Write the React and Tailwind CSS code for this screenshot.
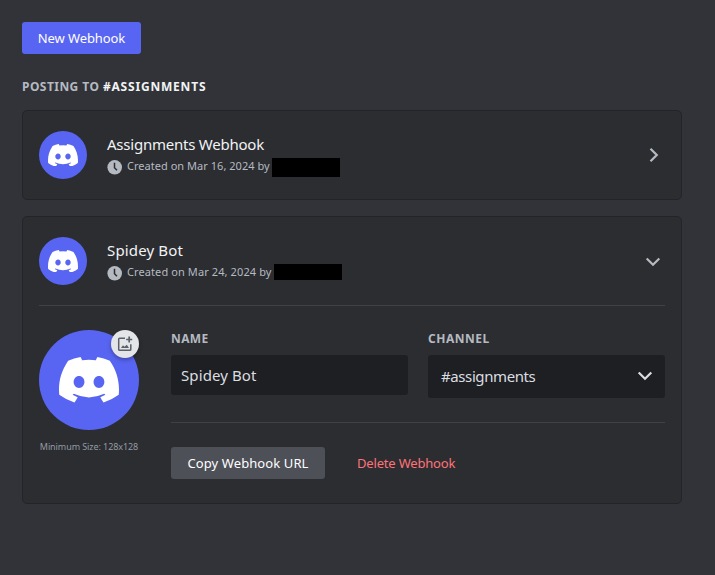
import React from "react";

function DiscordMark({ className }) {
  return (
    <svg viewBox="0 0 127.14 96.36" className={className} fill="#fff">
      <path d="M107.7,8.07A105.15,105.15,0,0,0,81.47,0a72.06,72.06,0,0,0-3.36,6.83A97.68,97.68,0,0,0,49,6.83,72.37,72.37,0,0,0,45.64,0,105.89,105.89,0,0,0,19.39,8.09C2.79,32.65-1.71,56.6.54,80.21h0A105.73,105.73,0,0,0,32.71,96.36,77.7,77.7,0,0,0,39.6,85.25a68.42,68.42,0,0,1-10.85-5.18c.91-.66,1.8-1.34,2.66-2a75.57,75.57,0,0,0,64.32,0c.87.71,1.76,1.39,2.66,2a68.68,68.68,0,0,1-10.87,5.19,77,77,0,0,0,6.89,11.1A105.25,105.25,0,0,0,126.6,80.22h0C129.24,52.84,122.09,29.11,107.7,8.07ZM42.45,65.69C36.18,65.69,31,60,31,53s5-12.74,11.43-12.74S54,46,53.89,53,48.84,65.69,42.45,65.69Zm42.24,0C78.41,65.69,73.25,60,73.25,53s5-12.74,11.44-12.74S96.23,46,96.12,53,91.08,65.69,84.69,65.69Z" />
    </svg>
  );
}

function Chevron({ className }) {
  return (
    <svg viewBox="0 0 24 24" className={`h-6 w-6 ${className}`} fill="none" stroke="currentColor" strokeWidth="2.2">
      <path d="M5.7 9.5 12 15.8l6.3-6.3" />
    </svg>
  );
}

function ClockIcon() {
  return (
    <svg viewBox="0 0 15 15" className="h-[15px] w-[15px] shrink-0">
      <circle cx="7.7" cy="7.3" r="7.3" fill="#b5bac1" />
      <path d="M7.5 2.8v5l2.5 2.4" fill="none" stroke="#2b2d31" strokeWidth="1.5" />
    </svg>
  );
}

function AddImageIcon() {
  return (
    <svg viewBox="0 0 16 16" className="h-4 w-4" fill="none" stroke="#5c6068">
      <path d="M8 2.2H2.6a.9.9 0 0 0-.9.9v10.3c0 .5.4.9.9.9h10.3c.5 0 .9-.4.9-.9V8.2" strokeWidth="1.5" />
      <path d="M12.2.5v6M9.2 3.5h6" strokeWidth="1.7" />
      <path d="M4 12l2-2.8 1.5 1.5L9.8 8.8 12 12z" fill="#5c6068" stroke="none" />
    </svg>
  );
}

function WebhookHeader({ name, nameClass, created, createdClass, redactedClass, chevron }) {
  return (
    <div className="flex h-[88px] items-center">
      <div className="flex h-12 w-12 shrink-0 items-center justify-center rounded-full bg-[#5865f2]">
        <DiscordMark className="w-[30px]" />
      </div>
      <div className="ml-5 flex-1">
        <div className={`h-5 whitespace-nowrap text-[15px] leading-5 text-[#f2f3f5] ${nameClass}`}>{name}</div>
        <div className="mt-1 flex h-[19px] items-center">
          <ClockIcon />
          <span className={`mb-[2px] ml-[5px] whitespace-nowrap text-[11px] leading-4 text-[#b5bac1] ${createdClass}`}>{created}</span>
          <span className={`shrink-0 bg-black ${redactedClass}`} />
        </div>
      </div>
      {chevron}
    </div>
  );
}

const card = "rounded-[5px] border border-[#232428] bg-[#2b2d31] px-4";
const label = "h-4 pt-px text-[12px] font-bold leading-4 text-[#b5bac1]";

export default function App() {
  return (
    <div className="h-[575px] w-[715px] bg-[#313338] pl-[22px] pr-[33px] pt-[22px] font-['Noto_Sans',sans-serif]">
      <button className="flex h-8 w-[119px] items-center justify-center whitespace-nowrap rounded-[3px] bg-[#5865f2] pt-px text-[13px] tracking-[-0.1px] text-white">
        New Webhook
      </button>
      <h2 className="mt-[25px] h-4 whitespace-nowrap text-[12px] font-bold leading-4 tracking-[0.45px] text-[#b5bac1]">
        POSTING TO <span className="tracking-[0.8px] text-[#f2f3f5]">#ASSIGNMENTS</span>
      </h2>

      <section className={`mt-[15px] h-[90px] ${card}`}>
        <WebhookHeader
          name="Assignments Webhook"
          nameClass="tracking-[-0.23px]"
          created="Created on Mar 16, 2024 by"
          createdClass="w-[143px] tracking-[0.03px]"
          redactedClass="ml-[2px] h-[19px] w-[68px]"
          chevron={<Chevron className="-rotate-90 text-[#b5bac1]" />}
        />
      </section>

      <section className={`mt-4 h-[288px] ${card}`}>
        <WebhookHeader
          name="Spidey Bot"
          nameClass="tracking-[0.15px]"
          created="Created on Mar 24, 2024 by"
          createdClass="w-[145px] tracking-[0.1px]"
          redactedClass="ml-[2px] mb-[3px] h-4 w-[68px]"
          chevron={<Chevron className="text-[#b5bac1]" />}
        />
        <div className="flex border-t border-[#3f4147] pt-6">
          <div className="w-[100px] shrink-0">
            <div className="relative flex h-[100px] w-[100px] items-center justify-center rounded-full bg-[#5865f2]">
              <DiscordMark className="w-[60px]" />
              <div className="absolute right-0 top-0 flex h-7 w-7 items-center justify-center rounded-full bg-[#e3e5e8] shadow-[0_2px_4px_rgba(0,0,0,0.3)]">
                <AddImageIcon />
              </div>
            </div>
            <div className="mt-[11px] whitespace-nowrap text-center text-[9px] leading-3 tracking-[-0.08px] text-[#949ba4]">Minimum Size: 128x128</div>
          </div>
          <div className="ml-8 flex-1">
            <div className="flex gap-5">
              <div className="w-[237px]">
                <div className={`${label} tracking-[0.4px]`}>NAME</div>
                <div className="mt-[9px] flex h-10 items-center rounded-[3px] bg-[#1e1f22] px-[10px] text-[15px] tracking-[0.1px] text-[#dbdee1]">
                  <span>Spidey Bot</span>
                </div>
              </div>
              <div className="w-[237px]">
                <div className={`${label} tracking-[0.5px]`}>CHANNEL</div>
                <div className="mt-[9px] flex h-[43px] items-center justify-between rounded-[3px] bg-[#1e1f22] pl-[13px] pr-2 text-[15px] tracking-[-0.4px] text-[#dbdee1]">
                  <span>#assignments</span>
                  <Chevron className="-mt-[3px] text-[#dbdee1]" />
                </div>
              </div>
            </div>
            <div className="mt-6 flex items-center border-t border-[#3f4147] pt-6">
              <button className="h-8 w-[154px] whitespace-nowrap rounded-[3px] bg-[#4e5058] pt-[2px] text-[13px] tracking-[0.1px] text-white">Copy Webhook URL</button>
              <button className="ml-8 whitespace-nowrap pt-[2px] text-[13px] tracking-[-0.18px] text-[#ff7378]">Delete Webhook</button>
            </div>
          </div>
        </div>
      </section>
    </div>
  );
}
